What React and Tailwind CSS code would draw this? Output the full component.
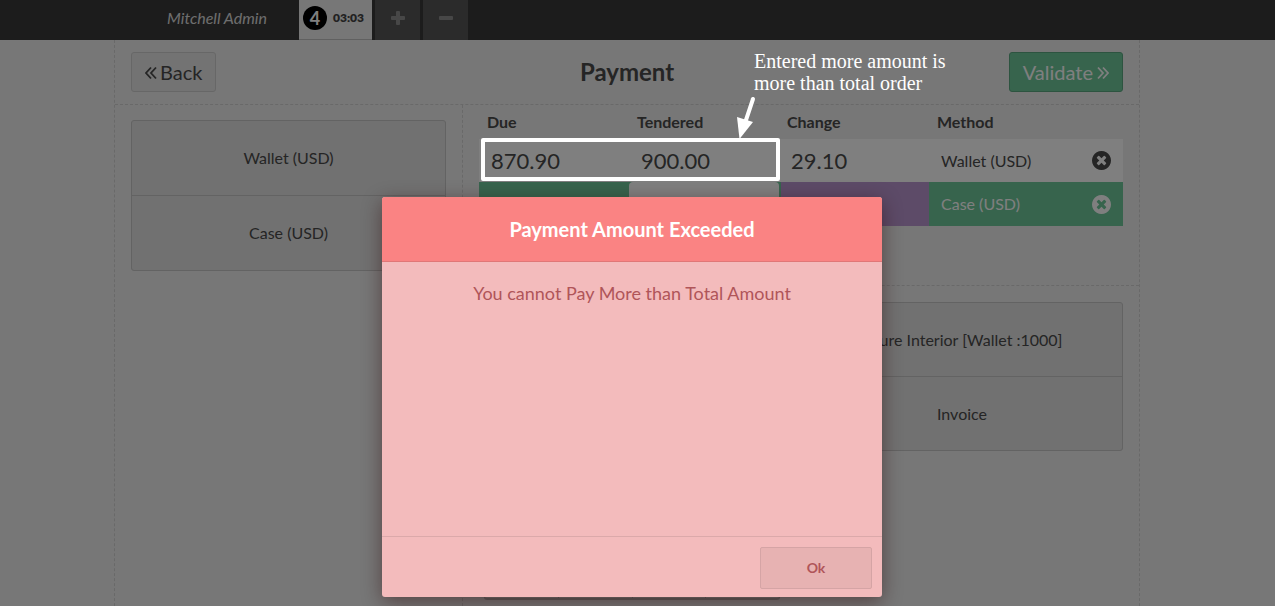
import React from "react";

const CIRCLE_X =
  "M1149 1122q0-26-19-45l-181-181 181-181q19-19 19-45 0-27-19-46l-90-90q-19-19-46-19-26 0-45 19l-181 181-181-181q-19-19-45-19-27 0-46 19l-90 90q-19 19-19 46 0 26 19 45l181 181-181 181q-19 19-19 45 0 27 19 46l90 90q19 19 46 19 26 0 45-19l181-181 181 181q19 19 45 19 27 0 46-19l90-90q19-19 19-46zm387-226q0 209-103 385.5t-279.5 279.5-385.5 103-385.5-103-279.5-279.5-103-385.5 103-385.5 279.5-279.5 385.5-103 385.5 103 279.5 279.5 103 385.5z";

function CircleX() {
  return (
    <svg viewBox="0 128 1536 1536" className="h-[19px] w-[19px]" fill="currentColor" aria-hidden="true">
      <path d={CIRCLE_X} />
    </svg>
  );
}

function Plus() {
  return (
    <svg viewBox="0 0 14 14" className="h-[14px] w-[14px]" fill="currentColor" aria-hidden="true">
      <rect x="0" y="5" width="14" height="4" rx="1" />
      <rect x="5" y="0" width="4" height="14" rx="1" />
    </svg>
  );
}

function Minus() {
  return (
    <svg viewBox="0 0 14 14" className="h-[14px] w-[14px]" fill="currentColor" aria-hidden="true">
      <rect x="0" y="5" width="14" height="4" rx="1" />
    </svg>
  );
}

function DoubleAngle({ right }) {
  return (
    <svg
      viewBox="0 0 12 14"
      className="mt-px h-[14px] w-3"
      fill="none"
      stroke="currentColor"
      strokeWidth="1.8"
      aria-hidden="true"
    >
      {right ? (
        <path d="M1 1.500 6 7l-5 5.500M6 1.500 11 7l-5 5.500" />
      ) : (
        <path d="M6 1.500 1 7l5 5.500M11 1.500 6 7l5 5.500" />
      )}
    </svg>
  );
}

function TopBar() {
  return (
    <header className="flex h-10 shrink-0 items-stretch bg-[#393939]">
      <div className="flex w-[299px] items-center justify-end pr-8 pb-1 text-base text-[#ddd] italic">
        Mitchell Admin
      </div>
      <nav className="flex gap-[3px]">
        <button className="flex w-[73px] items-center gap-1.5 border-b border-[#c0c0c0] bg-[#eee] pb-1 pl-1 text-[#444]">
          <span className="flex h-6 w-6 items-center justify-center rounded-full bg-black text-lg font-bold text-white">
            4
          </span>
          <span className="text-xs font-extrabold">03:03</span>
        </button>
        <button
          aria-label="New order"
          className="flex w-[45px] items-center justify-center bg-[#575757] pb-1 text-[#8f8f8f]"
        >
          <Plus />
        </button>
        <button
          aria-label="Delete order"
          className="flex w-[45px] items-center justify-center bg-[#575757] pb-1 text-[#8f8f8f]"
        >
          <Minus />
        </button>
      </nav>
    </header>
  );
}

function ButtonStack({ items, label, tall }) {
  return (
    <div
      role="group"
      aria-label={label}
      className="flex flex-col gap-px overflow-hidden rounded-[3px] border border-[#c6c6c6] bg-[#c6c6c6]"
    >
      {items.map((item) => (
        <button key={item} className={`bg-[#e2e2e2] text-base ${tall ? "h-[74px]" : "h-[73px]"}`}>
          {item}
        </button>
      ))}
    </div>
  );
}

function PaymentLines() {
  return (
    <table className="w-full table-fixed border-separate border-spacing-0 text-left">
      <colgroup>
        <col className="w-[150px]" />
        <col className="w-[150px]" />
        <col className="w-[150px]" />
        <col />
        <col className="w-11" />
      </colgroup>
      <thead>
        <tr className="h-[34px] text-base">
          <th className="px-2 font-bold">Due</th>
          <th className="px-2 font-bold">Tendered</th>
          <th className="px-2 font-bold">Change</th>
          <th className="px-2 font-bold">Method</th>
          <th />
        </tr>
      </thead>
      <tbody>
        <tr className="h-[43px] bg-white text-[22px]">
          <td className="px-3">870.90</td>
          <td className="px-3">900.00</td>
          <td className="px-3">29.10</td>
          <td className="px-3 text-base">Wallet (USD)</td>
          <td className="pl-[13px]">
            <button aria-label="Remove Wallet line" className="block">
              <CircleX />
            </button>
          </td>
        </tr>
        <tr className="h-11 bg-[#6ec89b] text-white">
          <td />
          <td className="p-0">
            <input
              aria-label="Tendered amount"
              className="block h-11 w-full rounded-[4px] bg-white px-3 text-[22px] text-[#444]"
            />
          </td>
          <td className="bg-[#ba96d0] shadow-[inset_2px_0_#6ec89b]" />
          <td className="px-3 text-base">Case (USD)</td>
          <td className="pl-[13px]">
            <button aria-label="Remove Case line" className="block">
              <CircleX />
            </button>
          </td>
        </tr>
      </tbody>
    </table>
  );
}

const KEYS = ["1", "2", "3", "+10", "4", "5", "6", "+20", "7", "8", "9", "+50", "C", "0", ".", "⌫"];

function Numpad() {
  return (
    <div className="grid w-[296px] shrink-0 grid-cols-4 gap-px overflow-hidden rounded-[3px] border border-b-2 border-[#bbb] bg-[#bbb]">
      {KEYS.map((key) => (
        <button key={key} className="h-[73px] bg-[#e2e2e2] text-xl">
          {key}
        </button>
      ))}
    </div>
  );
}

function PaymentScreen() {
  return (
    <div className="flex flex-1 pr-[21px]">
      <main className="mx-auto flex w-full max-w-[1026px] flex-col border-x border-dashed border-[#d3d3d3]">
        <div className="flex h-[65px] items-center justify-between border-b border-dashed border-[#d3d3d3] px-4">
          <div className="flex flex-1">
            <button className="flex h-10 items-center gap-[3px] rounded-[3px] border border-[#cfcfcf] bg-[#e6e6e6] px-[13px] text-xl">
              <DoubleAngle />
              Back
            </button>
          </div>
          <h1 className="text-2xl font-bold">Payment</h1>
          <div className="flex flex-1 justify-end">
            <button className="flex h-10 items-center gap-1 rounded-[3px] border border-[#5aa881] bg-[#6ec89b] px-[13px] text-xl text-white">
              Validate
              <DoubleAngle right />
            </button>
          </div>
        </div>
        <div className="flex flex-1">
          <aside className="w-[348px] border-r border-dashed border-[#d3d3d3] px-4 pt-[15px]">
            <ButtonStack tall label="Payment methods" items={["Wallet (USD)", "Case (USD)"]} />
          </aside>
          <section className="flex-1">
            <div className="min-h-[181px] border-b border-dashed border-[#d3d3d3] px-4">
              <PaymentLines />
            </div>
            <div className="flex gap-[21px] p-4 pl-[21px]">
              <Numpad />
              <div className="flex-1">
                <ButtonStack label="Order options" items={["Azure Interior [Wallet :1000]", "Invoice"]} />
              </div>
            </div>
          </section>
        </div>
      </main>
    </div>
  );
}

function ErrorDialog() {
  return (
    <div className="absolute inset-0 flex items-start justify-center bg-black/50 pt-[197px] pr-[11px]">
      <div
        role="alertdialog"
        aria-labelledby="dialog-title"
        aria-describedby="dialog-message"
        className="flex min-h-[400px] w-[500px] flex-col overflow-hidden rounded-[3px] bg-[#f3bbbc] text-[#b05559] shadow-[0_5px_20px_rgba(40,0,0,0.45)]"
      >
        <h2
          id="dialog-title"
          className="flex h-[65px] items-center justify-center border-b border-[#e07777] bg-[#fa8383] text-xl font-bold text-white"
        >
          Payment Amount Exceeded
        </h2>
        <p id="dialog-message" className="flex-1 pt-[17px] text-center text-lg">
          You cannot Pay More than Total Amount
        </p>
        <div className="flex h-[61px] items-start justify-end border-t border-[#dba9aa] p-2.5">
          <button className="h-[42px] w-28 rounded-[2px] border border-[#d5a4a5] bg-[#e7b2b2] text-sm font-bold">
            Ok
          </button>
        </div>
      </div>
    </div>
  );
}

function Annotation() {
  return (
    <div className="pointer-events-none absolute inset-0">
      <p className="absolute top-[50px] left-[754px] font-['Liberation_Serif',serif] text-xl leading-[22px] whitespace-nowrap text-white">
        Entered more amount is
        <br />
        more than total order
      </p>
      <svg className="absolute top-[94px] left-[732px] h-12 w-7" viewBox="0 0 28 48" aria-hidden="true">
        <path d="M21 5 14 26" stroke="white" strokeWidth="4" strokeLinecap="round" />
        <path d="M5 23 21 28 7.500 45z" fill="white" />
      </svg>
      <div className="absolute top-[138px] left-[481px] h-[43px] w-[299px] rounded-[2px] border-4 border-white" />
    </div>
  );
}

export default function App() {
  return (
    <div className="relative flex h-screen flex-col overflow-hidden bg-[#eee] font-[Lato,sans-serif] text-[#4a4a4a]">
      <TopBar />
      <PaymentScreen />
      <ErrorDialog />
      <Annotation />
    </div>
  );
}
